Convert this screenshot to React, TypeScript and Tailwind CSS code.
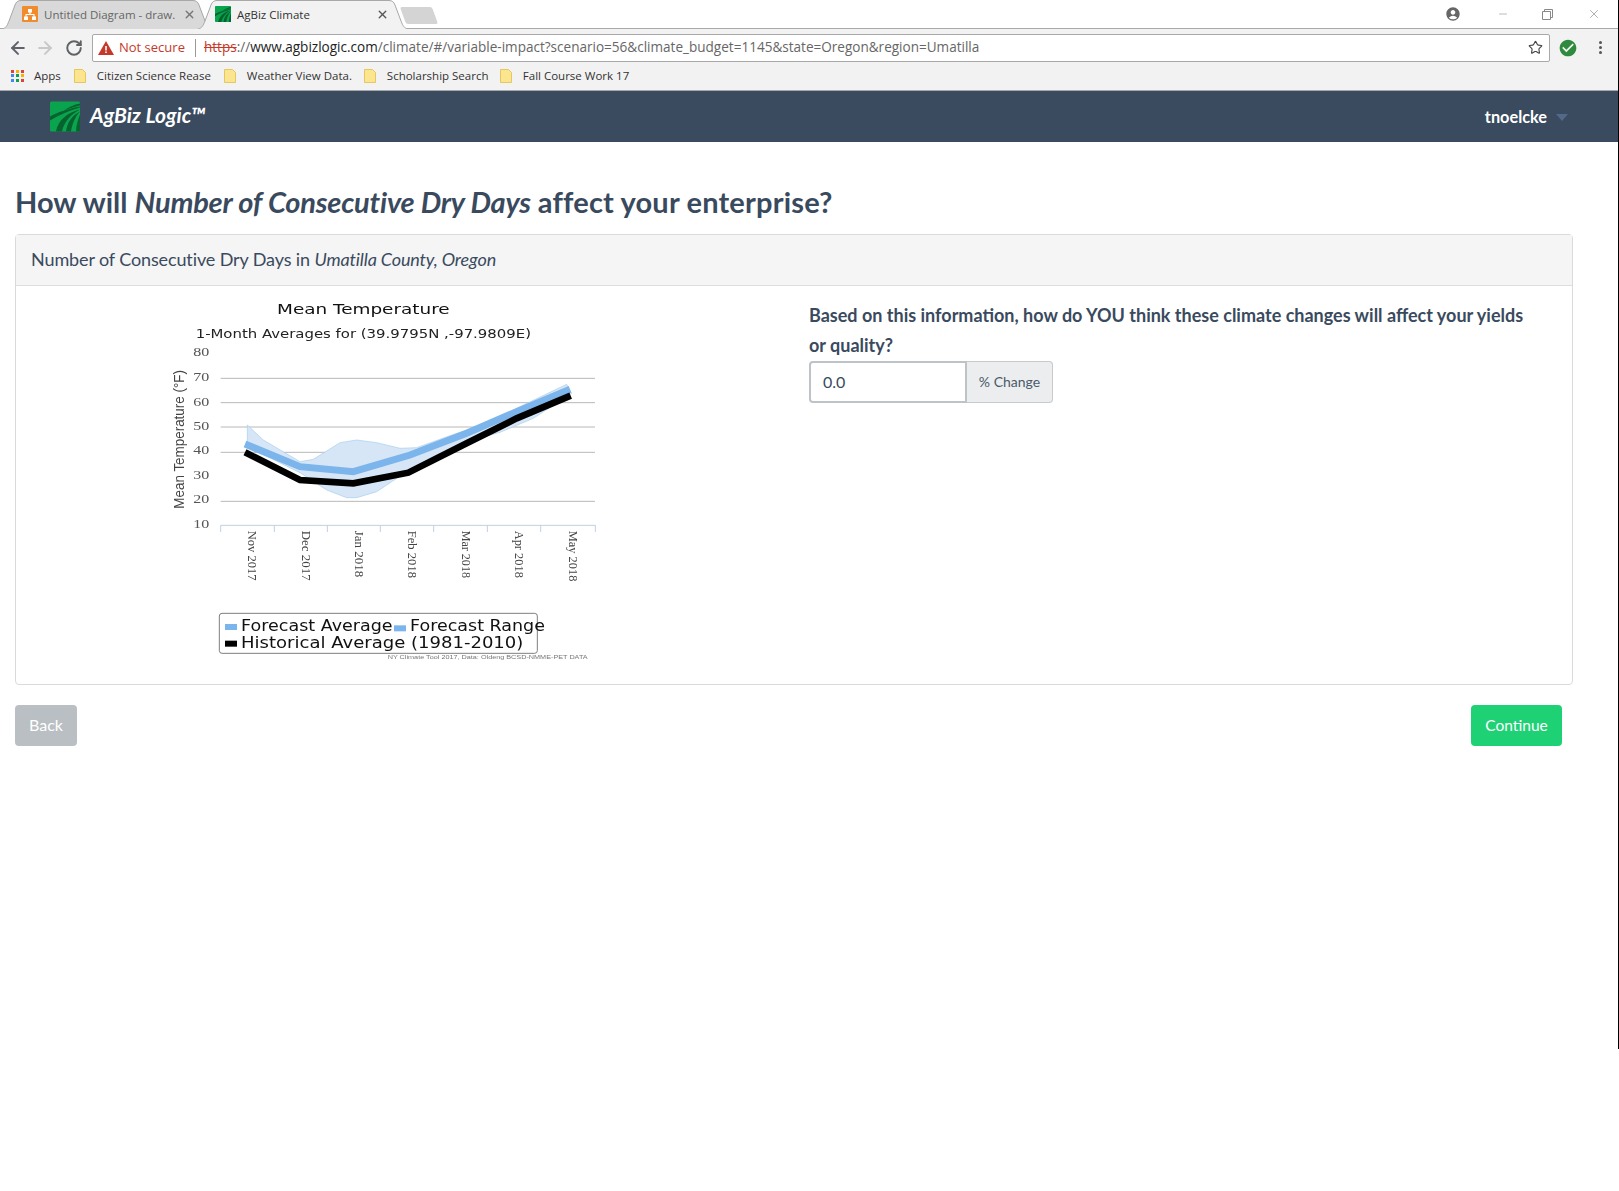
import { ArrowLeft, ArrowRight, RotateCw, Star, X, Minus } from "lucide-react";
import { MdAccountCircle, MdCheckCircle } from "react-icons/md";

const uiFont = "font-['Open_Sans',sans-serif]";
const lato = "font-['Lato',sans-serif]";

function Logo({ className }: { className: string }) {
  return (
    <svg viewBox="0 0 30 30" className={className}>
      <rect width="30" height="30" rx="1.500" fill="#0aa44e" />
      <path d="M30 5C19 7 7 11 0 15v4C8 14 20 9 30 6z" fill="#06632f" />
      <path d="M30 8C18 11 8 18 6 30h6C14 20 22 12 30 8z" fill="#06632f" />
      <path d="M30 10c-8 4-13 11-14 20h5c1-7 4-15 9-20z" fill="#06632f" />
      <path d="M30 13c-2 5-4 11-4 17h4z" fill="#06632f" />
      <path d="M30 2C24 3 18 6 14 9c5-2 11-4 16-5z" fill="#06632f" />
    </svg>
  );
}

function Folder() {
  return (
    <svg viewBox="0 0 12 14" className="h-[14px] w-[12px] shrink-0">
      <path d="M.5.5h8l3 3v10H.5z" fill="#fce58f" stroke="#e5c65f" />
    </svg>
  );
}

function Tab({ active, title, icon }: { active?: boolean; title: string; icon: React.ReactNode }) {
  return (
    <div className={`relative h-[28px] w-[210px] shrink-0 ${active ? "z-10 -ml-[14px]" : ""}`}>
      <svg viewBox="0 0 210 29" className="absolute left-0 top-0 h-[29px] w-[210px]">
        <path
          d="M0 29 C4 28 5 26 7 21 L13 5 C14 2 16 .5 19 .5 H191 C194 .5 196 2 197 5 L203 21 C205 26 206 28 210 29"
          fill={active ? "#f2f2f2" : "#d9d9d9"}
          stroke="#a8a8a8"
        />
      </svg>
      <div className={`relative flex h-[28px] items-center ${active ? "pl-[17px]" : "pl-[20px]"}`}>
        {icon}
        <span className={`ml-[6px] mt-[2px] w-[129px] whitespace-nowrap text-[11.5px] ${uiFont} ${active ? "text-[#333]" : "text-[#666]"}`}>
          {title}
        </span>
        <X size={13} strokeWidth={2.5} className={active ? "ml-[10px] text-[#555]" : "ml-[10px] text-[#777]"} />
      </div>
    </div>
  );
}

function Bookmark({ label, width }: { label: string; width: string }) {
  return (
    <div className="flex items-center">
      <Folder />
      <span className={`ml-[11px] whitespace-nowrap text-[11.5px] text-[#333] ${uiFont} ${width}`}>{label}</span>
    </div>
  );
}

function Chart() {
  const grid = [265, 338, 411, 487, 634];
  const yLabels = [
    ["80", 198],
    ["70", 272],
    ["60", 347],
    ["50", 419],
    ["40", 493],
    ["30", 567],
    ["20", 640],
    ["10", 714],
  ] as const;
  const ticks = [212, 373, 532, 691, 851, 1012, 1172, 1336];
  const months = [
    ["Nov 2017", 305, 150],
    ["Dec 2017", 465, 150],
    ["Jan 2018", 625, 140],
    ["Feb 2018", 785, 142],
    ["Mar 2018", 945, 142],
    ["Apr 2018", 1105, 142],
    ["May 2018", 1268, 152],
  ] as const;
  return (
    <svg viewBox="0 0 1380 1140" className="h-[380px] w-[460px] blur-[0.5px]">
      <text x="381" y="72" textLength="518" lengthAdjust="spacingAndGlyphs" fontFamily="DejaVu Sans" fontSize="42" fill="#111">
        Mean Temperature
      </text>
      <text x="137" y="144" textLength="1006" lengthAdjust="spacingAndGlyphs" fontFamily="DejaVu Sans" fontSize="36" fill="#222">
        1-Month Averages for (39.9795N ,-97.9809E)
      </text>
      {yLabels.map(([t, y]) => (
        <text key={t} x="130" y={y} textLength="48" lengthAdjust="spacingAndGlyphs" fontFamily="Liberation Serif" fontSize="36" fill="#555">
          {t}
        </text>
      ))}
      <text
        transform="translate(103 656) rotate(-90)"
        textLength="416"
        lengthAdjust="spacingAndGlyphs"
        fontFamily="Liberation Sans"
        fontSize="44"
        fill="#444"
      >
        Mean Temperature (°F)
      </text>
      {grid.map((y) => (
        <line key={y} x1="212" x2="1335" y1={y} y2={y} stroke="#b8b8b8" strokeWidth="3" />
      ))}
      <line x1="212" x2="1337" y1="706" y2="706" stroke="#c0d0e0" strokeWidth="3" />
      {ticks.map((x) => (
        <line key={x} x1={x} x2={x} y1="706" y2="726" stroke="#c0d0e0" strokeWidth="3" />
      ))}
      {months.map(([t, x, len]) => (
        <text
          key={t}
          transform={`translate(${x - 10} 722) rotate(90)`}
          textLength={len}
          lengthAdjust="spacingAndGlyphs"
          fontFamily="Liberation Serif"
          fontSize="36"
          fill="#444"
        >
          {t}
        </text>
      ))}
      <path
        d="M292 405 L340 450 L450 515 L490 508 L570 458 L620 450 L680 458 L750 475 L800 473 L900 437 L1000 403 L1110 350 L1250 283 L1265 310 L1150 385 L1050 427 L950 455 L850 500 L770 545 L680 605 L620 623 L590 623 L530 600 L450 548 L292 470 Z"
        fill="#d6e6f6"
        stroke="#a5cdf0"
        strokeWidth="2"
      />
      <polyline
        points="285,462 450,530 610,545 780,495 950,430 1100,365 1260,298"
        fill="none"
        stroke="#7cb4ec"
        strokeWidth="21"
      />
      <polyline
        points="285,487 450,570 610,580 775,548 950,460 1100,385 1262,317"
        fill="none"
        stroke="#000"
        strokeWidth="20"
      />
      <rect x="208" y="970" width="954" height="120" rx="8" fill="none" stroke="#666" strokeWidth="2.5" />
      <rect x="225" y="1002" width="36" height="18" fill="#7cb5ec" />
      <text x="273" y="1022" textLength="455" lengthAdjust="spacingAndGlyphs" fontFamily="DejaVu Sans" fontSize="46" fill="#111">
        Forecast Average
      </text>
      <rect x="732" y="1006" width="36" height="18" fill="#7cb5ec" />
      <text x="780" y="1022" textLength="405" lengthAdjust="spacingAndGlyphs" fontFamily="DejaVu Sans" fontSize="46" fill="#111">
        Forecast Range
      </text>
      <rect x="225" y="1052" width="36" height="18" fill="#000" />
      <text x="273" y="1073" textLength="847" lengthAdjust="spacingAndGlyphs" fontFamily="DejaVu Sans" fontSize="46" fill="#111">
        Historical Average (1981-2010)
      </text>
      <text x="713" y="1108" textLength="600" lengthAdjust="spacingAndGlyphs" fontFamily="Liberation Sans" fontSize="18" fill="#777">
        NY Climate Tool 2017, Data: Oldeng BCSD-NMME-PET DATA
      </text>
    </svg>
  );
}

export default function App() {
  return (
    <div className="flex h-[1191px] w-[1619px] overflow-hidden bg-white">
      <div className="w-[1618px] shrink-0">
        {/* browser chrome */}
        <div className="relative flex h-[28px] items-start">
          <div className="flex pl-[2px]">
            <Tab
              title="Untitled Diagram - draw."
              icon={
                <svg viewBox="0 0 16 16" className="h-[16px] w-[16px] shrink-0">
                  <rect width="16" height="16" rx="1" fill="#f08c2e" />
                  <path d="M6 3h4v3.500H8.600V8H12.500v2.500H14V14h-4v-3.500h1.500V9h-7v1.500H6V14H2v-3.500h1.500V8h3.900V6.500H6z" fill="#fff" />
                </svg>
              }
            />
            <Tab active title="AgBiz Climate" icon={<Logo className="h-[16px] w-[16px] shrink-0" />} />
          </div>
          <div className="-ml-[5px] mt-[7px] h-[17px] w-[32px] skew-x-[20deg] rounded-[2px] bg-[#d4d4d4]" />
          <div className="flex-1" />
          <MdAccountCircle size={16} className="mr-[36px] mt-[6px] text-[#666]" />
          <Minus size={12} strokeWidth={1} className="mr-[33px] mt-[8px] text-[#777]" />
          <svg viewBox="0 0 11 11" className="mr-[34px] mt-[9px] h-[11px] w-[11px]" fill="none" stroke="#888">
            <path d="M.5 2.500h8v8h-8zM2.500 2.500v-2h8v8h-2" />
          </svg>
          <X size={14} strokeWidth={1} className="mr-[17px] mt-[7px] text-[#777]" />
        </div>
        <div className="h-[63px] border-y border-[#a8a8a8] bg-[#f2f2f2]">
          <div className="flex h-[33px] items-center pl-[8px] pt-[4px]">
            <ArrowLeft size={20} strokeWidth={2.4} className="text-[#5f6368]" />
            <ArrowRight size={20} strokeWidth={2.4} className="ml-[7px] text-[#c8c8c8]" />
            <RotateCw size={18} strokeWidth={2.6} className="ml-[10px] text-[#5f6368]" />
            <div className={`ml-[9px] flex h-[28px] w-[1458px] items-center rounded-[2px] border border-[#a9a9a9] bg-white pl-[5px] pr-[6px] text-[13px] ${uiFont}`}>
              <svg viewBox="0 0 16 14" className="h-[14px] w-[16px] shrink-0">
                <path d="M8 0l8 14H0z" fill="#c5392a" />
                <path d="M7.200 5h1.600v4.500H7.200zM7.200 10.500h1.600V12H7.200z" fill="#fff" />
              </svg>
              <span className="ml-[5px] text-[#c5392a]">Not secure</span>
              <span className="ml-[10px] h-[18px] w-px bg-[#999]" />
              <span className="ml-[8px] flex-1 whitespace-nowrap text-[13.55px] text-[#666]">
                <span className="text-[#c5392a] line-through">https</span>
                ://<span className="text-[#222]">www.agbizlogic.com</span>
                /climate/#/variable-impact?scenario=56&climate_budget=1145&state=Oregon&region=Umatilla
              </span>
              <Star size={15} strokeWidth={1.8} className="text-[#444]" />
            </div>
            <MdCheckCircle size={20} className="ml-[8px] text-[#2e8b3d]" />
            <div className="ml-[21px] flex flex-col gap-[2px]">
              <span className="h-[3px] w-[3px] rounded-full bg-[#555]" />
              <span className="h-[3px] w-[3px] rounded-full bg-[#555]" />
              <span className="h-[3px] w-[3px] rounded-full bg-[#555]" />
            </div>
          </div>
          <div className="flex h-[28px] items-center pl-[11px]">
            <div className="grid h-[13px] w-[13px] grid-cols-3 gap-[1.500px]">
              {["#db4437", "#f4b400", "#db4437", "#4285f4", "#0f9d58", "#f4b400", "#4285f4", "#0f9d58", "#db4437"].map((c, i) => (
                <span key={i} className="h-[3px] w-[3px]" style={{ backgroundColor: c }} />
              ))}
            </div>
            <span className={`ml-[10px] text-[11.5px] text-[#333] ${uiFont}`}>Apps</span>
            <div className="ml-[13px] flex items-center gap-[13px]">
              <Bookmark label="Citizen Science Rease" width="w-[114px]" />
              <Bookmark label="Weather View Data." width="w-[104px]" />
              <Bookmark label="Scholarship Search" width="w-[100px]" />
              <Bookmark label="Fall Course Work 17" width="w-[110px]" />
            </div>
          </div>
        </div>

        {/* app navbar */}
        <div className={`flex h-[51px] items-center bg-[#3a4b5f] pl-[50px] pr-[50px] ${lato}`}>
          <Logo className="h-[31px] w-[30px]" />
          <span className="mb-[4px] ml-[10px] text-[21px] font-bold italic text-white">AgBiz Logic™</span>
          <div className="flex-1" />
          <span className="mt-[2px] text-[16.3px] font-bold text-white">tnoelcke</span>
          <span className="ml-[9px] mt-[2px] h-0 w-0 border-x-[6px] border-t-[7px] border-x-transparent border-t-[#52698a]" />
        </div>

        {/* page */}
        <div className={`px-[15px] pt-[37px] text-[#3a4a5e] ${lato}`}>
          <h1 className="h-[55px] text-[29px] font-bold leading-[46px]">
            How will <em className="tracking-[-0.2px]">Number of Consecutive Dry Days</em>{" "}
            <span className="tracking-[0.18px]">affect your enterprise?</span>
          </h1>
          <div className="h-[451px] w-[1558px] rounded-[4px] border border-[#dadada]">
            <div className="flex h-[51px] items-center border-b border-[#dddddd] bg-[#f5f5f5] pb-[2px] pl-[15px] text-[18px] tracking-[-0.12px]">
              <span>
                Number of Consecutive Dry Days in <em>Umatilla County, Oregon</em>
              </span>
            </div>
            <div className="flex">
              <div className="ml-[134px] mt-[4px] shrink-0">
                <Chart />
              </div>
              <div className="ml-[199px] w-[730px] pt-[14px]">
                <p className="text-[18px] font-bold leading-[30px]">
                  Based on this information, how do YOU think these climate changes will affect your yields or quality?
                </p>
                <div className="mt-[1px] flex h-[42px]">
                  <div className="flex w-[158px] items-center rounded-l-[4px] border-2 border-[#bdc3c7] bg-white pl-[12px] text-[16px] text-[#3a4a5e]">
                    0.0
                  </div>
                  <div className="flex w-[86px] items-center justify-center rounded-r-[4px] border border-l-0 border-[#c6cacd] bg-[#ecedee] pb-[1px] text-[14px] text-[#4a5a6a]">
                    % Change
                  </div>
                </div>
              </div>
            </div>
          </div>
          <div className="mt-[20px] flex w-[1547px] justify-between">
            <div className="flex h-[41px] w-[62px] items-center justify-center rounded-[4px] bg-[#b9bfc3] pb-[2px] text-[16px] text-white">
              Back
            </div>
            <div className="flex h-[41px] w-[91px] items-center justify-center rounded-[4px] bg-[#1fd175] text-[15.5px] text-white">
              Continue
            </div>
          </div>
        </div>
      </div>
      <div className="h-[1049px] w-px bg-black" />
    </div>
  );
}
